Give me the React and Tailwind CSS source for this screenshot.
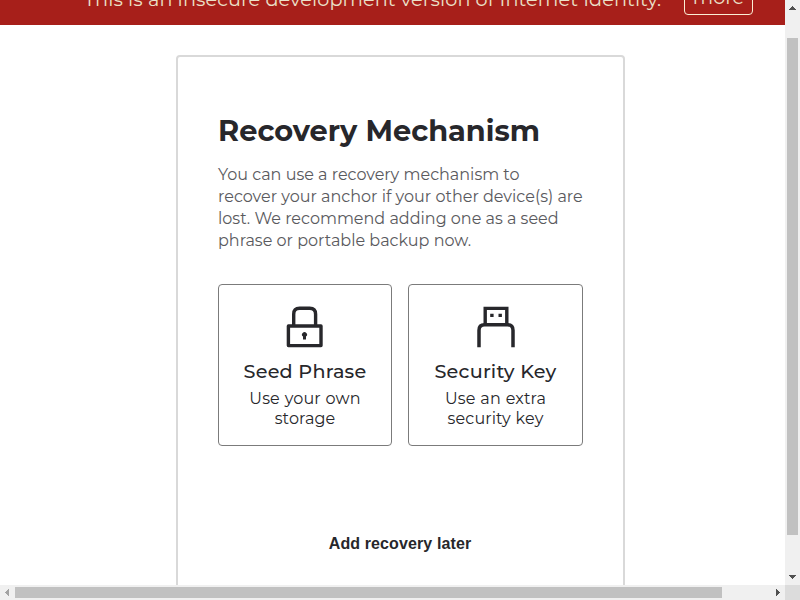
const montserrat = "font-['Montserrat','Inter',sans-serif]";

function Banner() {
  return (
    <div className="flex h-[25px] shrink-0 items-end overflow-hidden bg-[#a71f1a] pl-[84px] text-[#ebe0c8]">
      <p className="mb-[13px] w-[600px] whitespace-nowrap text-[19.2px] font-normal leading-[26px] tracking-[0.11px]">
        This is an insecure development version of Internet Identity.
      </p>
      <button className="mb-[10px] h-[34px] w-[69px] rounded border border-[#fbeed5] text-[19.2px] font-normal leading-[30px]">
        <span className="block pb-[2px]">more</span>
      </button>
    </div>
  );
}

function LockIcon() {
  return (
    <svg className="block h-[42px] w-[38px]" viewBox="0 0 38 42" fill="none">
      <path d="M7.7 19V8.2Q7.7 2.3 13.6 2.3H23.7Q29.6 2.3 29.6 8.2V19" stroke="#27272b" strokeWidth="3.4" />
      <rect x="2.4" y="20" width="32.6" height="19.6" stroke="#27272b" strokeWidth="3.4" strokeLinejoin="round" />
      <path d="M17 33.4V30.6A2.5 2.5 0 1 1 20 30.6V33.4Z" fill="#27272b" />
    </svg>
  );
}

function UsbIcon() {
  return (
    <svg className="block h-[42px] w-[38px]" viewBox="0 0 38 42" fill="none">
      <path d="M8.2 18V2.4H29.8V18" stroke="#27272b" strokeWidth="3.4" />
      <path d="M2 41.2V24.2Q2 18.7 7.5 18.7H30.5Q36 18.7 36 24.2V41.2" stroke="#27272b" strokeWidth="3.5" />
      <path d="M13.2 7.7h3.4V11H13.2ZM21.5 7.7H24.9V11H21.5Z" fill="#27272b" />
    </svg>
  );
}

function Option({ icon, title, lines, className }) {
  return (
    <button className={`flex h-[162px] flex-col items-center rounded border border-[#7b7b7b] pt-[21px] text-[#27272b] ${className}`}>
      {icon}
      <span className="mt-[8px] whitespace-nowrap text-[19.2px] font-medium leading-[30px] tracking-[0.22px]">{title}</span>
      <span className="mt-[3px] text-[16px] leading-[20px] tracking-[0.12px] [word-spacing:0.5px]">
        {lines.map((line) => (
          <span key={line} className="block whitespace-nowrap">{line}</span>
        ))}
      </span>
    </button>
  );
}

function VerticalScrollbar() {
  return (
    <div className="flex h-[585px] w-[15px] flex-col items-center bg-[#f0f0f0]">
      <svg className="block h-[38px] w-[15px] shrink-0" viewBox="0 0 15 38" shapeRendering="crispEdges">
        <path d="M4 10L7.5 6L11 10Z" fill="#505050" />
      </svg>
      <div className="h-[497px] w-[11px] bg-[#c1c1c1]" />
      <svg className="mt-auto block h-[15px] w-[15px]" viewBox="0 0 15 15" shapeRendering="crispEdges">
        <path d="M4 5L7.5 9L11 5Z" fill="#505050" />
      </svg>
    </div>
  );
}

function HorizontalScrollbar() {
  return (
    <div className="flex h-[15px] w-[800px] items-center bg-[#f0f0f0]">
      <svg className="block h-[15px] w-[15px]" viewBox="0 0 15 15" shapeRendering="crispEdges">
        <path d="M9 4L5 7.5L9 11Z" fill="#a3a3a3" />
      </svg>
      <div className="h-[11px] w-[707px] bg-[#c1c1c1]" />
      <svg className="ml-auto block h-[15px] w-[15px]" viewBox="0 0 15 15" shapeRendering="crispEdges">
        <path d="M6 4L10 7.5L6 11Z" fill="#505050" />
      </svg>
      <div className="h-[15px] w-[15px] bg-[#dcdcdc]" />
    </div>
  );
}

export default function App() {
  return (
    <div className="h-[600px] w-[800px] overflow-hidden bg-white">
      <div className="flex">
        <div className={`flex h-[585px] w-[785px] flex-col overflow-hidden ${montserrat}`}>
          <Banner />
          <main className="ml-[176px] mt-[30px] h-[600px] w-[449px] shrink-0 rounded border-2 border-[#d9d9d9] px-[40px] pt-[56px] text-[#27272b]">
            <h1 className="whitespace-nowrap text-[28.8px] font-bold leading-[36px] tracking-[0.02px]">Recovery Mechanism</h1>
            <p className="mt-[15px] text-[16px] leading-[22px] text-[#5a5a5e]">
              You can use a recovery mechanism to
              <br />
              recover your anchor if your other device(s) are
              <br />
              lost. We recommend adding one as a seed
              <br />
              phrase or portable backup now.
            </p>
            <div className="mt-[32px] flex gap-[16px]">
              <Option
                className="w-[174px]"
                icon={<LockIcon />}
                title="Seed Phrase"
                lines={["Use your own", "storage"]}
              />
              <Option
                className="w-[175px]"
                icon={<UsbIcon />}
                title="Security Key"
                lines={["Use an extra", "security key"]}
              />
            </div>
            <button className="mt-[86px] block h-[24px] w-full whitespace-nowrap text-center font-['Liberation_Sans',sans-serif] text-[16px] font-bold leading-[24px] tracking-[0.11px]">
              <span className="mr-px">Add recovery later</span>
            </button>
          </main>
        </div>
        <VerticalScrollbar />
      </div>
      <HorizontalScrollbar />
    </div>
  );
}
